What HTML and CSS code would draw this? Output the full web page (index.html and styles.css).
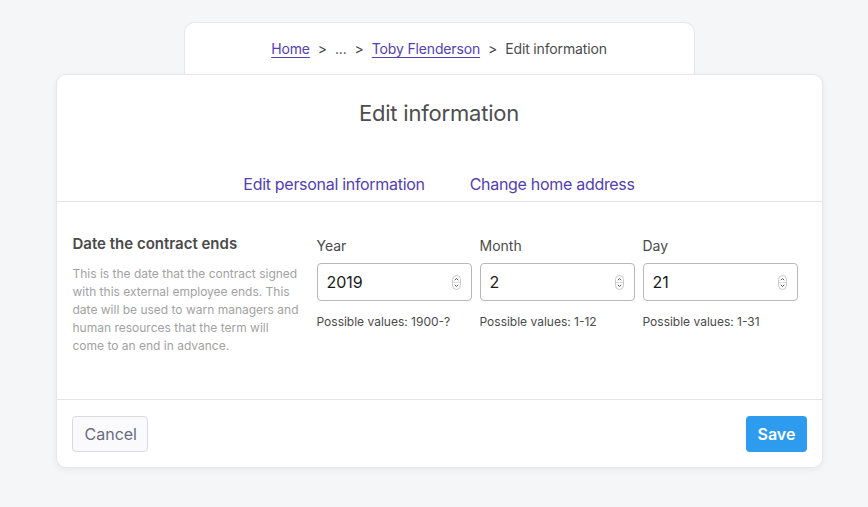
FILE: index.html
```html
<!DOCTYPE html>
<html lang="en">
<head>
<meta charset="utf-8">
<title>Edit information</title>
<link rel="stylesheet" href="styles.css">
</head>
<body>
<div class="page">
  <nav class="crumbs">
    <a href="#" class="crumb-link">Home</a>
    <span class="sep">&gt;</span>
    <span class="crumb">...</span>
    <span class="sep">&gt;</span>
    <a href="#" class="crumb-link">Toby Flenderson</a>
    <span class="sep">&gt;</span>
    <span class="crumb">Edit information</span>
  </nav>
  <main class="card">
    <header class="card-head">
      <h1 class="title">Edit information</h1>
      <div class="tabs">
        <a href="#" class="tab">Edit personal information</a>
        <a href="#" class="tab">Change home address</a>
      </div>
    </header>
    <section class="section">
      <div class="intro">
        <h2 class="intro-title">Date the contract ends</h2>
        <p class="intro-text">This is the date that the contract signed with this external employee ends. This date will be used to warn managers and human resources that the term will come to an end in advance.</p>
      </div>
      <div class="fields">
        <div class="field">
          <label class="field-label">Year</label>
          <div class="input">
            <input class="input-el" type="text" value="2019">
            <svg class="spin" width="9" height="15" viewBox="0 0 9 15"><rect x="0.5" y="0.5" width="8" height="14" rx="4" fill="#fff" stroke="#c9c9c9"/><line x1="1" y1="7.5" x2="8" y2="7.5" stroke="#dcdcdc"/><path d="M2.8 5.2 L4.5 3.6 L6.2 5.2" fill="none" stroke="#555" stroke-width="1"/><path d="M2.8 9.8 L4.5 11.4 L6.2 9.8" fill="none" stroke="#555" stroke-width="1"/></svg>
          </div>
          <p class="hint">Possible values: 1900-?</p>
        </div>
        <div class="field">
          <label class="field-label">Month</label>
          <div class="input">
            <input class="input-el" type="text" value="2">
            <svg class="spin" width="9" height="15" viewBox="0 0 9 15"><rect x="0.5" y="0.5" width="8" height="14" rx="4" fill="#fff" stroke="#c9c9c9"/><line x1="1" y1="7.5" x2="8" y2="7.5" stroke="#dcdcdc"/><path d="M2.8 5.2 L4.5 3.6 L6.2 5.2" fill="none" stroke="#555" stroke-width="1"/><path d="M2.8 9.8 L4.5 11.4 L6.2 9.8" fill="none" stroke="#555" stroke-width="1"/></svg>
          </div>
          <p class="hint">Possible values: 1-12</p>
        </div>
        <div class="field">
          <label class="field-label">Day</label>
          <div class="input">
            <input class="input-el" type="text" value="21">
            <svg class="spin" width="9" height="15" viewBox="0 0 9 15"><rect x="0.5" y="0.5" width="8" height="14" rx="4" fill="#fff" stroke="#c9c9c9"/><line x1="1" y1="7.5" x2="8" y2="7.5" stroke="#dcdcdc"/><path d="M2.8 5.2 L4.5 3.6 L6.2 5.2" fill="none" stroke="#555" stroke-width="1"/><path d="M2.8 9.8 L4.5 11.4 L6.2 9.8" fill="none" stroke="#555" stroke-width="1"/></svg>
          </div>
          <p class="hint">Possible values: 1-31</p>
        </div>
      </div>
    </section>
    <footer class="card-foot">
      <button class="btn btn-cancel" type="button">Cancel</button>
      <button class="btn btn-save" type="button">Save</button>
    </footer>
  </main>
</div>
</body>
</html>
```

FILE: styles.css
```css
* { box-sizing: border-box; }
html, body { margin: 0; padding: 0; }
body {
  background: #f5f6f8;
  font-family: Inter, "Helvetica Neue", Arial, sans-serif;
  color: #4a4a4a;
  width: 868px;
  height: 507px;
  overflow: hidden;
}
.page {
  display: flex;
  flex-direction: column;
  align-items: center;
  padding-top: 22px;
  padding-left: 10px;
}
.crumbs {
  width: 511px;
  height: 60px;
  margin-bottom: -8px;
  background: #fff;
  border: 1px solid #e6e7eb;
  border-bottom: none;
  border-radius: 10px 10px 0 0;
  display: flex;
  justify-content: center;
  align-items: flex-start;
  padding-top: 17px;
  font-size: 14px;
  letter-spacing: -0.15px;
  color: #4b4b4b;
}
.crumb-link {
  color: #5340b1;
  text-decoration: underline;
  text-underline-offset: 3px;
  text-decoration-thickness: 1px;
}
.sep { margin: 0 8px; }
.crumb { color: #4b4b4b; }
.card {
  position: relative;
  width: 767px;
  background: #fff;
  border: 1px solid #e6e7eb;
  border-radius: 10px;
  box-shadow: 0 2px 6px rgba(0,0,0,0.06);
}
.card-head {
  border-bottom: 1px solid #e3e4e8;
  display: flex;
  flex-direction: column;
  align-items: center;
}
.title {
  margin: 23px 0 0;
  font-size: 22px;
  font-weight: 400;
  color: #4e4e4e;
  line-height: 30px;
  letter-spacing: -0.2px;
}
.tabs {
  display: flex;
  gap: 45px;
  margin-top: 46px;
  padding-bottom: 7px;
}
.tab {
  color: #5340b1;
  text-decoration: none;
  font-size: 16px;
  line-height: 20px;
  letter-spacing: -0.3px;
}
.section {
  display: flex;
  padding: 32px 24px 44px 16px;
  border-bottom: 1px solid #e3e4e8;
}
.intro {
  width: 229px;
  flex: none;
  margin-right: 15px;
}
.intro-title {
  margin: 0 0 11px;
  font-size: 15px;
  font-weight: 600;
  color: #4a4a4a;
  line-height: 20px;
}
.intro-text {
  margin: 0;
  font-size: 12px;
  line-height: 18px;
  color: #a2a2a2;
}
.fields {
  display: grid;
  grid-template-columns: repeat(3, 155px);
  column-gap: 8px;
}
.field-label {
  display: block;
  font-size: 14px;
  line-height: 20px;
  color: #4a4a4a;
  margin-top: 2px;
  margin-bottom: 7px;
}
.input {
  display: flex;
  align-items: center;
  height: 38px;
  border: 1px solid #b8b8b8;
  border-radius: 4px;
  padding: 0 10px 0 9px;
  background: #fff;
}
.input-el {
  flex: 1;
  min-width: 0;
  border: none;
  outline: none;
  padding: 0;
  font-family: Inter, "Helvetica Neue", Arial, sans-serif;
  font-size: 16px;
  color: #1a1a1a;
  background: transparent;
}
.spin { flex: none; }
.hint {
  margin: 13px 0 0;
  font-size: 12px;
  line-height: 16px;
  color: #4a4a4a;
}
.card-foot {
  display: flex;
  justify-content: space-between;
  align-items: center;
  padding: 16px 15px 15px 15px;
}
.btn {
  height: 36px;
  border-radius: 4px;
  font-family: Inter, "Helvetica Neue", Arial, sans-serif;
  font-size: 16px;
  padding: 0 12px;
  cursor: pointer;
}
.btn-cancel {
  width: 76px;
  background: #fafafc;
  border: 1px solid #d9d9e0;
  color: #6b6b80;
}
.btn-save {
  width: 61px;
  background: #2d9cef;
  border: none;
  color: #fff;
  font-weight: 600;
}
```
